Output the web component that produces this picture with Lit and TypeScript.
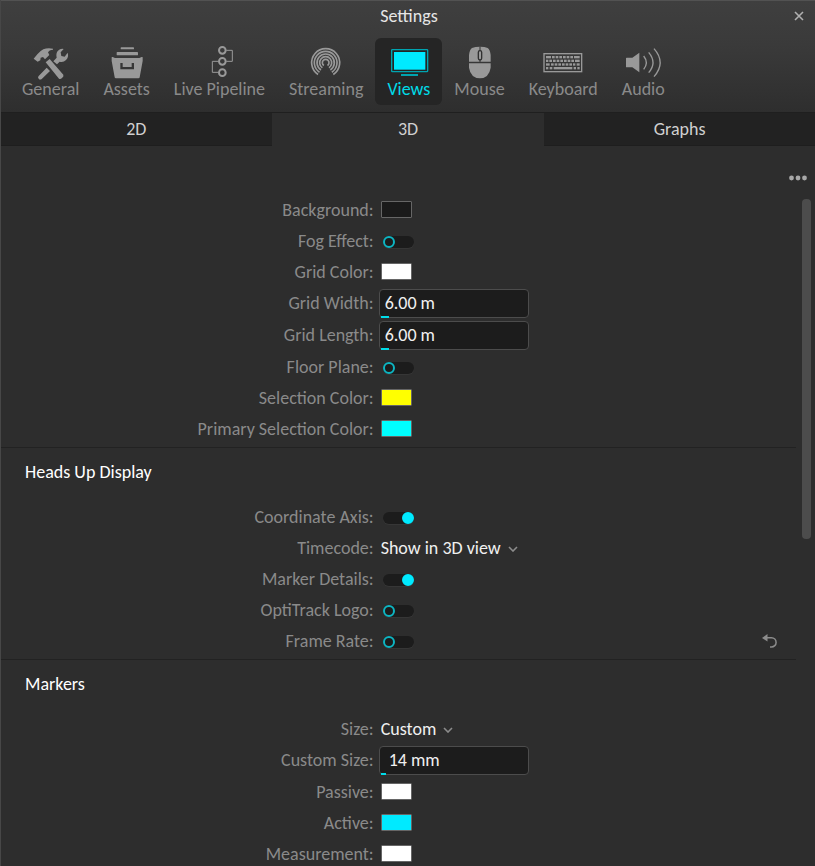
import { LitElement, html, css, svg, nothing, TemplateResult } from "lit";
import { customElement, property, state } from "lit/decorators.js";
import { classMap } from "lit/directives/class-map.js";

type Row = {
  label: string;
  kind: "color" | "toggle" | "number" | "choice";
  value: string;
  on?: boolean;
  padded?: boolean;
  reset?: boolean;
};

type Section = { title?: string; rows: Row[] };

const SECTIONS: Section[] = [
  {
    rows: [
      { label: "Background", kind: "color", value: "#1a1a1a" },
      { label: "Fog Effect", kind: "toggle", value: "" },
      { label: "Grid Color", kind: "color", value: "#ffffff" },
      { label: "Grid Width", kind: "number", value: "6.00 m" },
      { label: "Grid Length", kind: "number", value: "6.00 m" },
      { label: "Floor Plane", kind: "toggle", value: "" },
      { label: "Selection Color", kind: "color", value: "#ffff00" },
      { label: "Primary Selection Color", kind: "color", value: "#00ffff" },
    ],
  },
  {
    title: "Heads Up Display",
    rows: [
      { label: "Coordinate Axis", kind: "toggle", value: "", on: true },
      { label: "Timecode", kind: "choice", value: "Show in 3D view" },
      { label: "Marker Details", kind: "toggle", value: "", on: true },
      { label: "OptiTrack Logo", kind: "toggle", value: "" },
      { label: "Frame Rate", kind: "toggle", value: "", reset: true },
    ],
  },
  {
    title: "Markers",
    rows: [
      { label: "Size", kind: "choice", value: "Custom" },
      { label: "Custom Size", kind: "number", value: "14 mm", padded: true },
      { label: "Passive", kind: "color", value: "#ffffff" },
      { label: "Active", kind: "color", value: "#00eaff" },
      { label: "Measurement", kind: "color", value: "#ffffff" },
    ],
  },
];

// Broadcast rings, open in a wedge at the bottom.
const rings = [10, 18, 26, 34, 42].map((r) => {
  const dx = r * 0.545;
  const dy = r * 0.84;
  return svg`<path d="M${167 - dx} ${188 + dy}A${r} ${r} 0 1 1 ${167 + dx} ${188 + dy}"/>`;
});

const keyRow = (y: number, xs: [number, number][]) =>
  xs.map(([x, w]) => svg`<rect x=${x} y=${y} width=${w} height="7"/>`);

const TOOLS: { name: string; box: string; art: TemplateResult }[] = [
  {
    name: "General",
    box: "91 135 108 108",
    art: svg`<g fill="currentColor">
      <path d="M93 176L104 163Q112 153 122 148Q134 143 151 146V149Q139 150 136 157L140 165L127 178L121 171L114 173L113 181L105 185Z"/>
      <path d="M129 187L141 177L182 224Q184 229 178 234Q173 239 169 236Z"/>
      <path d="M108 228L132 203L142 213L118 236Q112 241 108 236Q104 232 108 228Z"/>
      <path d="M152 184L162 173Q159 159 166 152Q173 145 183 147L174 157L176 168L186 170L195 158Q199 171 190 180Q182 188 171 185L163 193Z"/>
    </g>`,
  },
  {
    name: "Assets",
    box: "323 135 108 108",
    art: svg`<g fill="currentColor">
      <rect x="358" y="142" width="40" height="6" rx="2"/>
      <rect x="346" y="156" width="64" height="10" rx="2"/>
      <path fill-rule="evenodd" d="M331 172Q331 170 334 171L341 174H414L421 171Q424 170 424 172V183L415 232Q415 235 411 235H344Q340 235 340 232L331 183ZM357 189V208H398V189H391V201H364V189Z"/>
    </g>`,
  },
  {
    name: "Live Pipeline",
    box: "606 135 108 108",
    art: svg`<g fill="none" stroke="currentColor">
      <g stroke-width="6"><circle cx="670" cy="151" r="10"/><circle cx="670" cy="184" r="10"/><circle cx="670" cy="218" r="10"/></g>
      <path stroke-width="3" d="M682 151H700V184H682M658 184H640V217H658"/>
    </g>`,
  },
  {
    name: "Streaming",
    box: "114 135 108 108",
    art: svg`<g fill="none" stroke="currentColor" stroke-width="5">${rings}</g>`,
  },
  {
    name: "Views",
    box: "363 135 108 108",
    art: svg`<g>
      <rect x="365" y="149" width="108" height="66" rx="2" fill="none" stroke="#00a4b0" stroke-width="4"/>
      <rect x="372" y="156" width="94" height="53" fill="currentColor"/>
      <rect x="393" y="222" width="51" height="6" fill="#00a4b0"/>
    </g>`,
  },
  {
    name: "Mouse",
    box: "579 135 108 108",
    art: svg`<g>
      <path fill="currentColor" d="M600 185V165Q602 149 609 144Q618 140 633 140Q648 140 656 144Q663 149 665 165V185ZM600 190H665V203Q660 234 633 235Q605 234 600 203Z"/>
      <path stroke="#303030" stroke-width="3" d="M633 140V186"/>
      <rect x="628" y="152" width="10" height="28" rx="5" fill="currentColor" stroke="#303030" stroke-width="4"/>
    </g>`,
  },
  {
    name: "Keyboard",
    box: "20 135 108 108",
    art: svg`<g fill="currentColor">
      <rect x="17" y="161" width="113" height="54" fill="none" stroke="currentColor" stroke-width="4"/>
      ${keyRow(168, [[23, 15], [41, 8], [52, 8], [63, 8], [74, 8], [85, 8], [96, 8], [107, 17]])}
      ${keyRow(179, [[23, 7], [33, 8], [44, 8], [55, 8], [66, 8], [77, 8], [88, 8], [99, 8], [110, 14]])}
      ${keyRow(190, [[23, 11], [38, 8], [49, 8], [60, 8], [71, 8], [82, 8], [93, 8], [104, 7], [115, 9]])}
      ${keyRow(201, [[23, 7], [34, 8], [46, 56], [106, 7], [117, 7]])}
    </g>`,
  },
  {
    name: "Audio",
    box: "260 135 108 108",
    art: svg`<g fill="currentColor">
      <path d="M263 175Q263 173 265 173H282L303 158V217L282 202H265Q263 202 263 200Z"/>
      <g fill="none" stroke="currentColor" stroke-width="4"><path d="M316 168Q332 188 316 208M331 157Q357 188 331 218M347 146Q384 188 347 230"/></g>
    </g>`,
  },
];

const shared = css`
  *, *::before { box-sizing: border-box; }
  button, input, select { font: inherit; color: inherit; margin: 0; padding: 0; border: 0; background: none; }
  svg { display: block; }
`;

@customElement("setting-row")
class SettingRow extends LitElement {
  @property({ attribute: false }) row!: Row;

  static styles = [
    shared,
    css`
      :host { display: block; }
      .row {
        display: grid;
        grid-template-columns: calc(47% - 1px) auto 1fr;
        align-items: center;
        height: 31px;
      }
      .number { height: 32px; }
      .label { text-align: right; color: #8a8a8a; white-space: nowrap; }
      .control { margin-left: 7px; display: flex; align-items: center; color: #f0f0f0; }
      .swatch { appearance: none; width: 31px; height: 17px; border: 1px solid #666; border-radius: 1px; }
      .swatch::-webkit-color-swatch-wrapper { padding: 0; }
      .swatch::-webkit-color-swatch { border: 0; border-radius: 0; }
      .toggle {
        appearance: none;
        display: flex;
        width: 31px;
        height: 12px;
        margin: 3px 0 0 2px;
        border-radius: 6px;
        background: #1c1c1c;
        box-shadow: 0 1px 0 #363636;
      }
      .toggle::before {
        content: "";
        width: 12px;
        height: 12px;
        border: 2px solid #0db5c2;
        border-radius: 50%;
      }
      .toggle:checked { justify-content: flex-end; }
      .toggle:checked::before { background: #00eaff; border-color: #00eaff; }
      .field {
        position: relative;
        width: 150px;
        height: 29px;
        margin-left: -2px;
        border: 1px solid #4c4c4c;
        border-radius: 4px;
        background: #1c1c1c;
      }
      .text { display: block; width: 100%; height: 100%; padding-left: 5px; outline: 0; }
      .padded .text { padding-left: 9px; }
      .level { position: absolute; left: 1px; bottom: -1px; width: 8px; height: 2px; background: #00dbe8; }
      .padded .level { width: 5px; }
      .select { appearance: none; field-sizing: content; outline: 0; }
      .chevron { margin: 2px 0 0 7px; pointer-events: none; }
      .reset { justify-self: end; margin-right: 18px; color: #8c8c8c; }
    `,
  ];

  private control() {
    const r = this.row;
    switch (r.kind) {
      case "color":
        return html`<input id="control" class="swatch" type="color" .value=${r.value} />`;
      case "toggle":
        return html`<input id="control" class="toggle" type="checkbox" .checked=${!!r.on} />`;
      case "number":
        return html`<div class=${classMap({ field: true, padded: !!r.padded })}>
          <input id="control" class="text" type="text" .value=${r.value} /><span class="level"></span>
        </div>`;
      case "choice":
        return html`<select id="control" class="select"><option>${r.value}</option></select>
          <svg class="chevron" width="10" height="6" viewBox="0 0 10 6" fill="none" stroke="#8c8c8c" stroke-width="1.6"><path d="M1 1L5 5L9 1"/></svg>`;
    }
  }

  render() {
    const r = this.row;
    return html`<div class=${classMap({ row: true, number: r.kind === "number" })}>
      <label class="label" for="control">${r.label}:</label>
      <div class="control">${this.control()}</div>
      ${r.reset
        ? html`<button class="reset" aria-label="Reset ${r.label}">
            <svg width="16" height="16" viewBox="0 0 16 16">
              <path d="M0 5L5.5 1V8.5Z" fill="currentColor"/>
              <path d="M5 4.8H9.5A4.6 4.6 0 0 1 9.5 14H8" fill="none" stroke="currentColor" stroke-width="1.5"/>
            </svg>
          </button>`
        : nothing}
    </div>`;
  }
}

@customElement("app-root")
class AppRoot extends LitElement {
  @state() private tool = "Views";
  @state() private tab = "3D";

  static styles = [
    shared,
    css`
      :host {
        display: flex;
        flex-direction: column;
        height: 100vh;
        box-sizing: border-box;
        border-left: 1px solid #474747;
        background: #2d2d2d;
        color: #e6e6e6;
        font: 18px/20px Carlito, Lato, sans-serif;
        overflow: hidden;
      }
      .header {
        flex: none;
        border-top: 1px solid #525252;
        border-bottom: 1px solid #1f1f1f;
        background: linear-gradient(#3f3f3f, #3a3a3a 40%, #2e2e2e);
      }
      .titlebar {
        display: grid;
        grid-template-columns: 1fr auto 1fr;
        align-items: center;
        height: 30px;
        padding: 0 11px 0 13px;
      }
      .title { grid-column: 2; margin: 0; font-size: 18px; font-weight: 400; }
      .close { justify-self: end; color: #b0b0b0; }
      .tools { display: flex; padding: 7px 9px; }
      .tool {
        display: flex;
        flex-direction: column;
        align-items: center;
        height: 67px;
        padding: 7px 12px 0;
        border-radius: 6px;
        color: #999;
      }
      .tool svg { overflow: visible; margin-bottom: -2px; }
      .name { color: #8a8a8a; }
      .tool.active { background: #252525; color: #00eaff; }
      .active .name { color: #00dbe8; }
      .tabs { flex: none; display: grid; grid-template-columns: repeat(3, 1fr); gap: 1px; }
      .tab { height: 33px; background: #222; border-bottom: 1px solid #1e1e1e; color: #d0d0d0; }
      .tab.active { background: none; border-color: transparent; }
      .more { flex: none; align-self: flex-end; height: 48px; padding: 15px 8px 0; color: #a8a8a8; }
      .body { flex: 1; min-height: 0; display: flex; }
      .list { flex: 1; min-width: 0; overflow: hidden; }
      .section { padding-bottom: 3px; }
      .section + .section { border-top: 1px solid #222; }
      .heading { margin: 0 0 5px 24px; font-size: 18px; line-height: 48px; font-weight: 400; color: #fff; }
      .scroll { flex: none; width: 19px; padding: 5px 4px 0 6px; }
      .thumb { height: 51%; border-radius: 4px; background: #4c4c4c; }
    `,
  ];

  render() {
    return html`
      <header class="header">
        <div class="titlebar">
          <h1 class="title">Settings</h1>
          <button class="close" aria-label="Close">
            <svg width="10" height="10" viewBox="0 0 10 10" stroke="currentColor" stroke-width="1.6"><path d="M1 1L9 9M9 1L1 9"/></svg>
          </button>
        </div>
        <nav class="tools">
          ${TOOLS.map(
            (t) => html`<button
              class=${classMap({ tool: true, active: t.name === this.tool })}
              @click=${() => (this.tool = t.name)}
            >
              <svg width="36" height="36" viewBox=${t.box} aria-hidden="true">${t.art}</svg>
              <span class="name">${t.name}</span>
            </button>`
          )}
        </nav>
      </header>
      <div class="tabs" role="tablist">
        ${["2D", "3D", "Graphs"].map(
          (t) => html`<button
            role="tab"
            aria-selected=${t === this.tab}
            class=${classMap({ tab: true, active: t === this.tab })}
            @click=${() => (this.tab = t)}
          >${t}</button>`
        )}
      </div>
      <button class="more" aria-label="More options">
        <svg width="18" height="6" viewBox="0 0 18 6" fill="currentColor"><circle cx="2.5" cy="3" r="2.4"/><circle cx="9" cy="3" r="2.4"/><circle cx="15.5" cy="3" r="2.4"/></svg>
      </button>
      <div class="body">
        <main class="list">
          ${SECTIONS.map(
            (s) => html`<section class="section">
              ${s.title ? html`<h2 class="heading">${s.title}</h2>` : nothing}
              ${s.rows.map((r) => html`<setting-row .row=${r}></setting-row>`)}
            </section>`
          )}
        </main>
        <div class="scroll"><div class="thumb"></div></div>
      </div>
    `;
  }
}
